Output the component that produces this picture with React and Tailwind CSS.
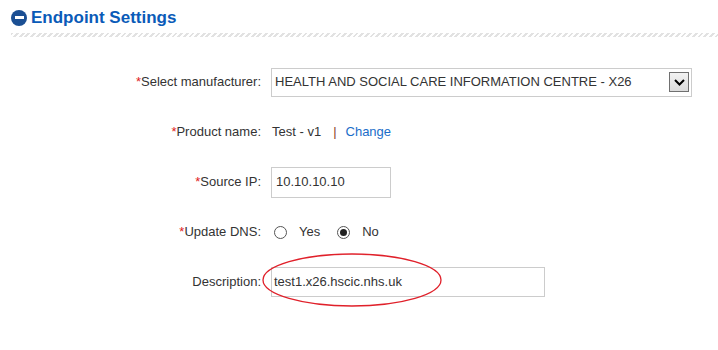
import React from 'react';

const Label = ({ required, children }) => (
  <div className="text-right pr-[10px] whitespace-nowrap">
    {required && <span className="text-[#e02020]">*</span>}
    {children}
  </div>
);

const Radio = ({ checked }) => (
  <span className="inline-flex w-[13px] h-[13px] rounded-full border border-[#555] bg-white items-center justify-center">
    {checked && <span className="w-[7px] h-[7px] rounded-full bg-[#222]" />}
  </span>
);

export default function App() {
  return (
    <div className="relative w-[718px] h-[350px] bg-white text-[13px] text-[#333] font-['Liberation_Sans',Arial,sans-serif]">
      {/* Header */}
      <div className="flex items-center gap-[4px] pl-[11px] pt-[9px] h-[26px]">
        <span className="w-[16px] h-[16px] rounded-full bg-[#1b4f93] flex items-center justify-center">
          <span className="w-[9px] h-[3px] bg-white" />
        </span>
        <h2 className="text-[17px] font-bold text-[#0a5bb8] leading-none">Endpoint Settings</h2>
      </div>
      <div className="ml-[11px] mt-[7px] h-[4px] bg-[repeating-linear-gradient(135deg,#e2e2e2_0_2px,transparent_2px_4px)]" />

      {/* Form */}
      <div className="grid grid-cols-[271px_1fr] auto-rows-[50px] items-center mt-[20px]">
        <Label required>Select manufacturer:</Label>
        <div className="w-[421px] h-[29px] border border-[#ccc] flex items-center justify-between pl-[3px] pr-[2px]">
          <span className="text-[13px] text-[#333]">HEALTH AND SOCIAL CARE INFORMATION CENTRE - X26</span>
          <span className="w-[20px] h-[20px] border border-[#707070] bg-gradient-to-b from-[#f2f2f2] to-[#dcdcdc] flex items-center justify-center">
            <svg width="11" height="7" viewBox="0 0 11 7">
              <path d="M1 1 L5.5 5.5 L10 1" fill="none" stroke="#000" strokeWidth="2" />
            </svg>
          </span>
        </div>

        <Label required>Product name:</Label>
        <div className="flex items-center pl-[1px]">
          <span>Test - v1</span>
          <span className="ml-[12px] text-[#8a3a2a]">|</span>
          <a className="ml-[9px] text-[#1a6dc9]">Change</a>
        </div>

        <Label required>Source IP:</Label>
        <div className="w-[120px] h-[31px] border border-[#ccc] flex items-center pl-[4px]">10.10.10.10</div>

        <Label required>Update DNS:</Label>
        <div className="flex items-center pl-[3px]">
          <Radio />
          <span className="ml-[12px]">Yes</span>
          <span className="ml-[17px]"><Radio checked /></span>
          <span className="ml-[12px]">No</span>
        </div>

        <Label>Description:</Label>
        <div className="w-[274px] h-[30px] border border-[#ccc] flex items-center pl-[2px]">test1.x26.hscic.nhs.uk</div>
      </div>

      {/* Red annotation ellipse */}
      <svg className="absolute left-0 top-0 pointer-events-none" width="718" height="350">
        <ellipse cx="352" cy="280" rx="89" ry="26" fill="none" stroke="#e0202a" strokeWidth="1.3" />
      </svg>
    </div>
  );
}
